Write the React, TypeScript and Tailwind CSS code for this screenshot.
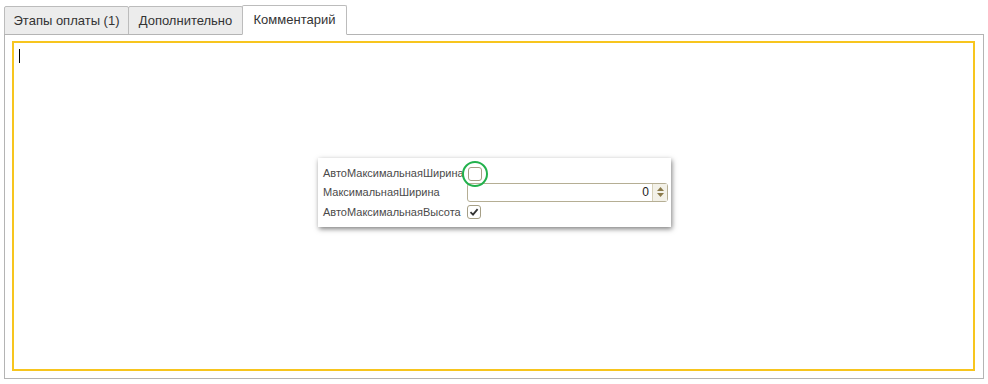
import React from 'react';

const tabs = [
  { label: 'Этапы оплаты (1)', width: 'w-[125px]' },
  { label: 'Дополнительно', width: 'w-[115px]' },
  { label: 'Комментарий', width: 'w-[105px]', active: true },
];

function CheckBox({ checked }: { checked?: boolean }) {
  return (
    <div className="w-[14px] h-[14px] border border-[#a69f86] rounded-[3px] bg-white flex items-center justify-center">
      {checked && (
        <svg width="10" height="10" viewBox="0 0 10 10">
          <path d="M1.5 5.2 L4 7.6 L8.6 2.2" fill="none" stroke="#333" strokeWidth="1.8" />
        </svg>
      )}
    </div>
  );
}

export default function App() {
  return (
    <div className="w-[988px] h-[384px] bg-white relative font-['Liberation_Sans',Arial,sans-serif]">
      {/* Tabs */}
      <div className="flex items-end pl-[4px] pt-[4px] h-[34px]">
        {tabs.map(t => (
          <div key={t.label}
            className={`${t.width} flex items-center justify-center text-[13px] text-[#333] border border-[#bcbcbc] rounded-t-[2px] -mr-px ${
              t.active ? 'h-[30px] bg-white border-b-white relative z-10 -mb-px' : 'h-[29px] bg-[#ececec] -mb-px'
            }`}>
            {t.label}
          </div>
        ))}
      </div>

      {/* Panel */}
      <div className="mx-[4px] h-[345px] border border-[#b4b4b4] pt-[6px] pl-[7px] pr-[8px] pb-[7px] relative">
        <div className="h-full border-2 border-[#f7c51e] relative">
          <div className="absolute left-[5px] top-[6px] w-px h-[14px] bg-black" />
        </div>

        {/* Floating property panel */}
        <div className="absolute left-[313px] top-[123px] w-[353px] h-[69px] bg-white shadow-[1px_2px_5px_rgba(0,0,0,0.5)] pl-[5px] pt-[7px] text-[11px] text-[#4a4a4a]">
          <div className="flex items-center h-[17px]">
            <span className="w-[145px]">АвтоМаксимальнаяШирина</span>
            <div className="relative">
              <CheckBox />
              <div className="absolute -left-[6px] -top-[6px] w-[26px] h-[26px] rounded-full border-2 border-[#22b14c]" />
            </div>
          </div>
          <div className="flex items-center h-[20px]">
            <span className="w-[144px]">МаксимальнаяШирина</span>
            <div className="w-[201px] h-[19px] border border-[#b5ae94] rounded-[3px] flex items-stretch">
              <div className="flex-1 text-right pr-[3px] text-[12px] text-[#222] leading-[17px]">0</div>
              <div className="w-[15px] border-l border-[#d6d0b8] bg-[#f3f1e8] flex flex-col items-center justify-center gap-[2px]">
                <svg width="7" height="4" viewBox="0 0 7 4"><path d="M0 4 L3.5 0 L7 4Z" fill="#8a7a4a" /></svg>
                <svg width="7" height="4" viewBox="0 0 7 4"><path d="M0 0 L3.5 4 L7 0Z" fill="#8a7a4a" /></svg>
              </div>
            </div>
          </div>
          <div className="flex items-center h-[20px]">
            <span className="w-[144px]">АвтоМаксимальнаяВысота</span>
            <CheckBox checked />
          </div>
        </div>
      </div>
    </div>
  );
}
